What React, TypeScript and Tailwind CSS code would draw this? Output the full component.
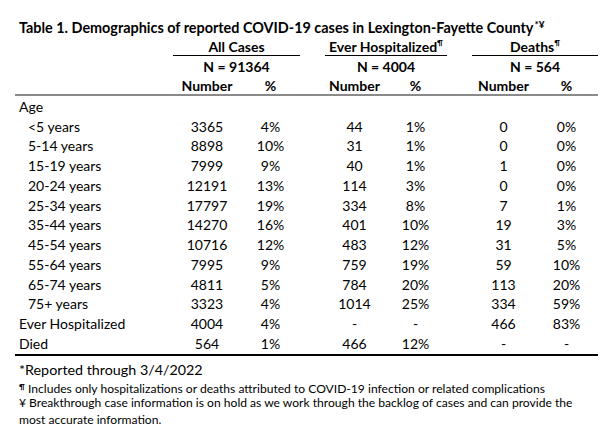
const ageRows: [string, string, string, string, string, string, string][] = [
  ["<5 years", "3365", "4%", "44", "1%", "0", "0%"],
  ["5-14 years", "8898", "10%", "31", "1%", "0", "0%"],
  ["15-19 years", "7999", "9%", "40", "1%", "1", "0%"],
  ["20-24 years", "12191", "13%", "114", "3%", "0", "0%"],
  ["25-34 years", "17797", "19%", "334", "8%", "7", "1%"],
  ["35-44 years", "14270", "16%", "401", "10%", "19", "3%"],
  ["45-54 years", "10716", "12%", "483", "12%", "31", "5%"],
  ["55-64 years", "7995", "9%", "759", "19%", "59", "10%"],
  ["65-74 years", "4811", "5%", "784", "20%", "113", "20%"],
  ["75+ years", "3323", "4%", "1014", "25%", "334", "59%"],
];

const totalRows: [string, string, string, string, string, string, string][] = [
  ["Ever Hospitalized", "4004", "4%", "-", "-", "466", "83%"],
  ["Died", "564", "1%", "466", "12%", "-", "-"],
];

const cols = "grid grid-cols-[158px_68px_59px_25px_59px_63px_25px_63px_63px]";

function DataRow({ row, indent }: { row: string[]; indent?: boolean }) {
  const [label, a, ap, h, hp, d, dp] = row;
  return (
    <div className={`${cols} h-[19.75px] items-center`}>
      <div className={indent ? "pl-[13px]" : "pl-[4px]"}>{label}</div>
      <div className="text-center">{a}</div>
      <div className="text-center">{ap}</div>
      <div />
      <div className="text-center">{h}</div>
      <div className="text-center">{hp}</div>
      <div />
      <div className="text-center">{d}</div>
      <div className="text-center">{dp}</div>
    </div>
  );
}

export default function App() {
  return (
    <div className="w-[600px] h-[426px] bg-white text-black font-['Lato',_sans-serif] overflow-hidden">
      <div className="pl-[15px] pr-[2px] pt-[18px]">
        <h1 className="pl-[4px] h-[20px] leading-[20px] text-[14.4px] font-bold whitespace-nowrap">
          Table 1. Demographics of reported COVID-19 cases in Lexington-Fayette County
          <span className="text-[10px] leading-none relative -top-[5px] ml-[1px]">*¥</span>
        </h1>

        <div className="text-[14px] leading-none">
          {/* group headers */}
          <div className={`${cols} h-[18px] font-bold`}>
            <div />
            <div className="col-span-2 border-b border-black flex items-center justify-center">
              All Cases
            </div>
            <div />
            <div className="col-span-2 border-b border-black flex items-center justify-center">
              Ever Hospitalized<span className="text-[8px] -top-[4px] relative">¶</span>
            </div>
            <div />
            <div className="col-span-2 border-b border-black flex items-center justify-center">
              Deaths<span className="text-[8px] -top-[4px] relative">¶</span>
            </div>
          </div>
          <div className={`${cols} h-[21px] items-center font-bold`}>
            <div />
            <div className="col-span-2 text-center">N = 91364</div>
            <div />
            <div className="col-span-2 text-center">N = 4004</div>
            <div />
            <div className="col-span-2 text-center">N = 564</div>
          </div>
          <div className={`${cols} h-[19px] items-center font-bold border-b-2 border-[#8a8a8a]`}>
            <div />
            <div className="text-center">Number</div>
            <div className="text-center">%</div>
            <div />
            <div className="text-center">Number</div>
            <div className="text-center">%</div>
            <div />
            <div className="text-center">Number</div>
            <div className="text-center">%</div>
          </div>

          <div className="pt-[1px] border-b-2 border-black">
            <div className="h-[19.75px] flex items-center pl-[4px]">Age</div>
            {ageRows.map((r) => (
              <DataRow key={r[0]} row={r} indent />
            ))}
            {totalRows.map((r) => (
              <DataRow key={r[0]} row={r} />
            ))}
          </div>
        </div>

        <div className="pl-[4px] whitespace-nowrap">
          <p className="mt-[5px] text-[14.3px] leading-[17px]">*Reported through 3/4/2022</p>
          <div className="text-[12.1px] leading-[14px]">
            <p className="mt-[4px]">
              <span className="text-[8px] leading-none font-bold relative -top-[3px]">¶</span> Includes only hospitalizations or deaths attributed to COVID-19 infection or related complications
            </p>
            <p>¥ Breakthrough case information is on hold as we work through the backlog of cases and can provide the</p>
            <p className="mt-[3px]">most accurate information.</p>
          </div>
        </div>
      </div>
    </div>
  );
}
